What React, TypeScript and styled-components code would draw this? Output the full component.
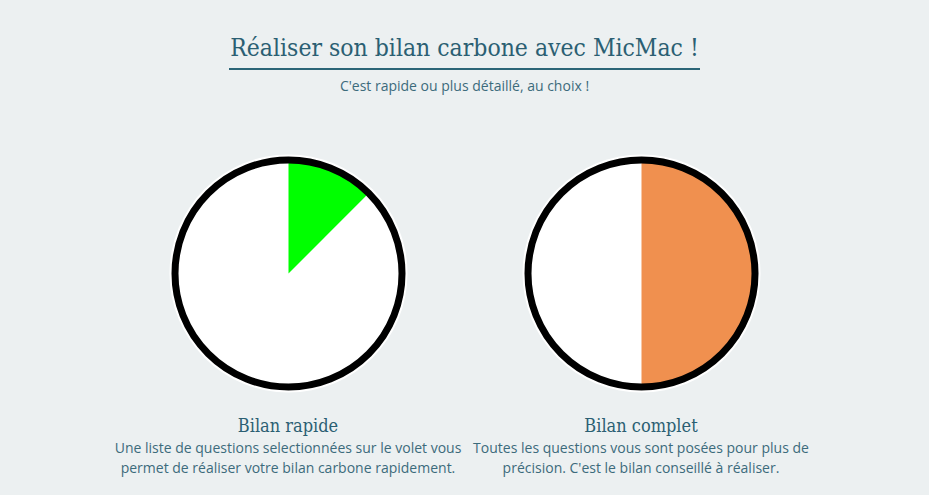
import React from 'react';
import styled, { createGlobalStyle } from 'styled-components';

const GlobalStyle = createGlobalStyle`
  html, body {
    margin: 0;
    padding: 0;
    background: #ecf0f1;
  }
  body {
    font-family: 'Open Sans', 'Noto Sans', sans-serif;
  }
`;

const Page = styled.main`
  width: 929px;
  min-height: 495px;
  display: flex;
  flex-direction: column;
  align-items: center;
  padding-top: 30px;
  box-sizing: border-box;
`;

const Header = styled.header`
  display: flex;
  flex-direction: column;
  align-items: center;
`;

const Title = styled.h1`
  margin: 0;
  padding: 0 1px 3px;
  font-family: 'DejaVu Serif', 'Liberation Serif', serif;
  font-stretch: condensed;
  font-weight: 400;
  font-size: 24.5px;
  line-height: 35px;
  color: #2b5f73;
  border-bottom: 2px solid #2b6577;
`;

const Subtitle = styled.p`
  margin: 6px 0 0;
  font-size: 14px;
  line-height: 20px;
  color: #3c6b7c;
`;

const Options = styled.section`
  display: flex;
  margin-top: 58px;
`;

const Option = styled.article`
  width: 353px;
  display: flex;
  flex-direction: column;
  align-items: center;
`;

const Chart = styled.svg`
  display: block;
  width: 239px;
  height: 239px;
`;

const OptionTitle = styled.h2`
  margin: 21px 0 0;
  font-family: 'DejaVu Serif', 'Liberation Serif', serif;
  font-stretch: condensed;
  font-weight: 400;
  font-size: 18px;
  line-height: 24px;
  color: #2b5f73;
`;

const OptionText = styled.p`
  margin: 0;
  font-size: 14px;
  line-height: 20px;
  text-align: center;
  color: #3c6b7c;
`;

type Pie = { fraction: number; color: string };

function PieChart({ fraction, color }: Pie) {
  const c = 119.5;
  const r = 113;
  const a = fraction * 2 * Math.PI;
  const x = c + r * Math.sin(a);
  const y = c - r * Math.cos(a);
  const large = fraction > 0.5 ? 1 : 0;
  return (
    <Chart viewBox="0 0 239 239">
      <circle cx={c} cy={c} r={119} fill="#fff" />
      <path d={`M${c} ${c} L${c} ${c - r} A${r} ${r} 0 ${large} 1 ${x} ${y} Z`} fill={color} />
      <circle cx={c} cy={c} r={113.5} fill="none" stroke="#000" strokeWidth={7} />
    </Chart>
  );
}

const options = [
  {
    title: 'Bilan rapide',
    fraction: 0.125,
    color: '#00ff00',
    lines: ['Une liste de questions selectionnées sur le volet vous', 'permet de réaliser votre bilan carbone rapidement.'],
  },
  {
    title: 'Bilan complet',
    fraction: 0.5,
    color: '#f0904f',
    lines: ['Toutes les questions vous sont posées pour plus de', "précision. C'est le bilan conseillé à réaliser."],
  },
];

export default function App() {
  return (
    <>
      <GlobalStyle />
      <Page>
        <Header>
          <Title>Réaliser son bilan carbone avec MicMac !</Title>
          <Subtitle>C'est rapide ou plus détaillé, au choix !</Subtitle>
        </Header>
        <Options>
          {options.map((o) => (
            <Option key={o.title}>
              <PieChart fraction={o.fraction} color={o.color} />
              <OptionTitle>{o.title}</OptionTitle>
              <OptionText>
                {o.lines[0]}
                <br />
                {o.lines[1]}
              </OptionText>
            </Option>
          ))}
        </Options>
      </Page>
    </>
  );
}
